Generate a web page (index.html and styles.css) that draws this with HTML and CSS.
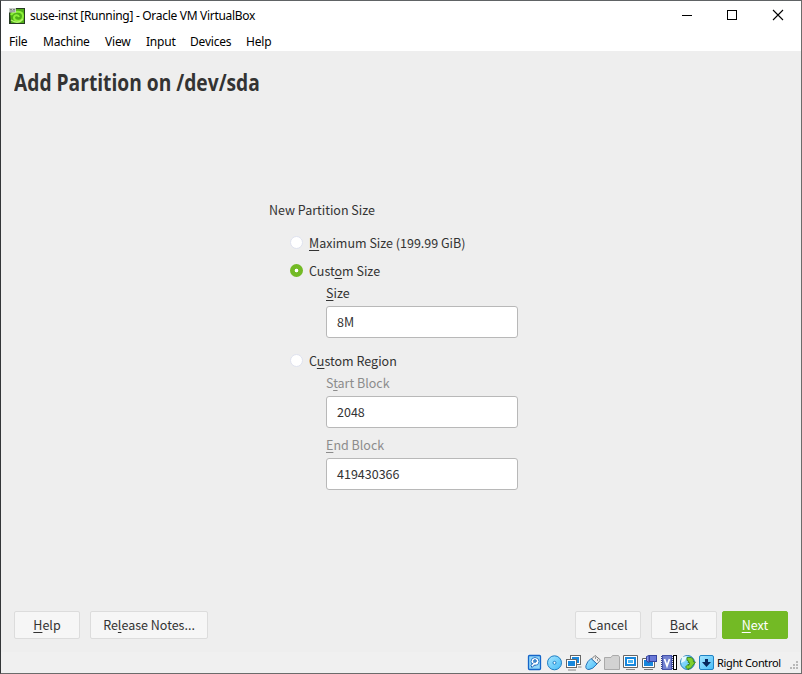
FILE: index.html
```
<!DOCTYPE html>
<html lang="en">
<head>
<meta charset="utf-8">
<title>suse-inst [Running] - Oracle VM VirtualBox</title>
<link rel="stylesheet" href="styles.css">
</head>
<body>
<div class="window">
  <header class="titlebar">
    <svg class="app-icon" width="16" height="16" viewBox="0 0 16 16">
      <rect width="16" height="16" fill="#263a22"/>
      <path d="M1 5L7 1H15V15H2Z" fill="#4fae18"/>
      <path d="M2 7C5 2 14 3 14 8C14 14 6 14 5 10C5 7 9 6 10 9" fill="none" stroke="#8df03a" stroke-width="2"/>
      <path d="M2 12Q9 17 14 11" fill="none" stroke="#b5f56f" stroke-width="1.300"/>
      <rect width="7" height="4.500" fill="#c9cdc8"/>
      <path d="M1 1.500H3M4 1.500H6M1 3H6" stroke="#66706a" stroke-width=".8"/>
    </svg>
    <span class="caption">suse-inst [Running] - Oracle VM VirtualBox</span>
    <div class="controls">
      <svg width="46" height="29" viewBox="0 0 46 29" shape-rendering="crispEdges"><path d="M18 14.500H28" stroke="#000"/></svg>
      <svg width="46" height="29" viewBox="0 0 46 29" shape-rendering="crispEdges"><rect x="17.500" y="9.500" width="9" height="9" fill="none" stroke="#000"/></svg>
      <svg width="46" height="29" viewBox="0 0 46 29"><path d="M17 9L27 19M27 9L17 19" stroke="#000" stroke-width="1.100"/></svg>
    </div>
  </header>
  <nav class="menubar">
    <span class="m-file">File</span><span class="m-machine">Machine</span><span class="m-view">View</span><span class="m-input">Input</span><span class="m-devices">Devices</span><span class="m-help">Help</span>
  </nav>
  <main class="screen">
    <h1>Add Partition on /dev/sda</h1>
    <form class="form">
      <div class="group-title">New Partition Size</div>
      <div class="option first"><i class="radio"></i><span><u>M</u>aximum Size (199.99 GiB)</span></div>
      <div class="option second"><i class="radio on"></i><span>Cust<u>o</u>m Size</span></div>
      <div class="field"><div class="label"><u>S</u>ize</div><div class="input">8M</div></div>
      <div class="option third"><i class="radio"></i><span>C<u>u</u>stom Region</span></div>
      <div class="field off"><div class="label">S<u>t</u>art Block</div><div class="input">2048</div></div>
      <div class="field off last"><div class="label"><u>E</u>nd Block</div><div class="input">419430366</div></div>
    </form>
    <footer class="buttons">
      <div class="btn"><span><u>H</u>elp</span></div>
      <div class="btn wide"><span>Re<u>l</u>ease Notes...</span></div>
      <div class="btn cancel"><span><u>C</u>ancel</span></div>
      <div class="btn back"><span><u>B</u>ack</span></div>
      <div class="btn next"><span><u>N</u>ext</span></div>
    </footer>
  </main>
  <div class="statusbar">
    <svg width="190" height="18" viewBox="526 654 190 18" class="tray">
      <defs>
        <linearGradient id="sky" x1="0" y1="0" x2="1" y2="1"><stop offset="0" stop-color="#a8e6ff"/><stop offset="1" stop-color="#45bcf8"/></linearGradient>
      </defs>
      <g>
        <rect x="528.500" y="655.500" width="12" height="14" rx="1" fill="#8fd6fa" stroke="#1565c8" stroke-width="1.300"/>
        <circle cx="535" cy="661.500" r="4" fill="#fff" stroke="#2c7ccc"/>
        <circle cx="535" cy="661" r="1.300" fill="#5fb9ee" stroke="#1c62b4"/>
        <path d="M533.500 662.500L531 665.500L532 667.500L535 664.500" fill="#fff" stroke="#1c62b4"/>
      </g>
      <g>
        <circle cx="554.500" cy="662.800" r="7" fill="url(#sky)" stroke="#1f7fc4"/>
        <circle cx="554.500" cy="662.800" r="1.500" fill="#fff" stroke="#1f7fc4"/>
      </g>
      <g>
        <path d="M568 670H576M578 667H581.500" stroke="#888"/>
        <rect x="570.500" y="655.500" width="10" height="9" fill="#fff" stroke="#666"/>
        <rect x="572" y="657" width="7" height="6" fill="#1787dc"/>
        <rect x="566.500" y="659.500" width="10" height="8" fill="#fff" stroke="#666"/>
        <rect x="568" y="661" width="7" height="5" fill="#1787dc"/>
      </g>
      <g>
        <path d="M595 655.500L600.500 660L597 664L591.500 659Z" fill="#eee" stroke="#777"/>
        <path d="M591 658.500L597 664Q592.500 669.500 589 669.500Q585 669.500 586 665.500Q587 661.500 591 658.500Z" fill="url(#sky)" stroke="#2872b8"/>
        <path d="M595 658h1M597 660h1" stroke="#444"/>
      </g>
      <path d="M604.500 669.500V657.500H611L612.500 655.500H618.500L619.500 657V669.500Z" fill="#d2d2d2" stroke="#aaa"/>
      <g>
        <path d="M623.500 655.500H637.500V667.500H623.500Z" fill="#fff" stroke="#666"/>
        <rect x="625" y="657" width="11" height="9" fill="#1787dc"/>
        <rect x="627.500" y="659.500" width="6" height="4" fill="#4bb5f3" stroke="#fff"/>
        <path d="M626 669.500H635" stroke="#888"/>
      </g>
      <g>
        <path d="M642.500 658.500H654.500V667.500H642.500Z" fill="#fff" stroke="#666"/>
        <rect x="644" y="660" width="9" height="6" fill="#1787dc"/>
        <path d="M644 669.500H653" stroke="#777"/>
        <path d="M646.500 656.500L649 655.500V662.500L646.500 661Z" fill="#8795ed" stroke="#34449f"/>
        <rect x="649.500" y="655.500" width="7" height="6" fill="#6978d8" stroke="#34449f"/>
      </g>
      <g>
        <rect x="662.500" y="655.500" width="9" height="14" fill="#7180d0" stroke="#4653a8"/>
        <path d="M661.500 656V669M672.500 656V669" stroke="#2d3b91" stroke-dasharray="1 1"/>
        <path d="M664.500 659L667 666L669.500 659" fill="none" stroke="#fff" stroke-width="1.700"/>
        <rect x="673.500" y="655.500" width="3" height="14" fill="#fff" stroke="#000"/>
      </g>
      <g>
        <circle cx="687.500" cy="662.500" r="7" fill="url(#sky)" stroke="#267db5"/>
        <path d="M682 657L687 656L685 661L681 663Z" fill="#e6faff"/>
        <path d="M687 657.500H691Q694 658.500 693.500 662H695.500L692 666.500Q691 669 688.500 668.500V670L685.500 667L688.500 664V665.500Q690 665 689.500 662.500H688Q690 660.500 687 660.500Z" fill="#7fcf2e" stroke="#347c18" stroke-width=".8"/>
      </g>
      <g>
        <rect x="699.500" y="655.500" width="14" height="14" rx="1.500" fill="url(#sky)" stroke="#1f82c4"/>
        <path d="M705 659H708V662H711L706.500 667L702 662H705Z" fill="#08285d"/>
      </g>
    </svg>
    <span class="hostkey">Right Control</span>
    <svg class="grip" width="9" height="9" viewBox="0 0 9 9" fill="#b8b8b8"><path d="M6 0h2v2H6zM3 3h2v2H3zM6 3h2v2H6zM0 6h2v2H0zM3 6h2v2H3zM6 6h2v2H6z"/></svg>
  </div>
</div>
</body>
</html>
```
FILE: styles.css
```
* { box-sizing: border-box; }
body { margin: 0; background: #fff; overflow: hidden; }

.window {
  width: 802px;
  height: 674px;
  display: flex;
  flex-direction: column;
  border: 1px solid #6b6b6b;
  border-top-color: #606365;
  border-left-color: #333638;
  background: #fff;
  font-family: "Noto Sans", "Open Sans", sans-serif;
  font-size: 12px;
  color: #000;
}

.titlebar { height: 29px; display: flex; align-items: center; padding-left: 8px; }
.app-icon { flex: none; }
.caption { margin-left: 5px; white-space: nowrap; letter-spacing: -0.3px; line-height: 29px; }
.controls { margin-left: auto; margin-right: -1px; display: flex; }
.controls svg { display: block; }

.menubar { height: 21px; display: flex; padding-left: 8px; line-height: 24px; letter-spacing: -0.2px; }
.menubar span { white-space: nowrap; }
.m-file { width: 34px; }
.m-machine { width: 62px; }
.m-view { width: 41px; }
.m-input { width: 44px; }
.m-devices { width: 56px; }

.screen {
  height: 601px;
  display: flex;
  flex-direction: column;
  background: #eee;
  color: #333;
  font-family: "Noto Sans CJK SC", sans-serif;
  font-size: 12.5px;
}
h1 {
  width: max-content;
  margin: 13px 0 0 13px;
  font-family: "Open Sans", sans-serif;
  font-size: 24px;
  line-height: 36px;
  font-weight: 700;
  transform: scaleX(.8);
  transform-origin: left;
}
u { text-decoration: underline; text-decoration-thickness: 1px; text-underline-offset: 2px; text-decoration-skip-ink: none; }

.form { margin: 100px 0 0 268px; width: 250px; }
.group-title { height: 20px; line-height: 20px; }
.option { height: 20px; line-height: 20px; display: flex; align-items: center; padding-left: 21px; gap: 6px; white-space: nowrap; }
.first { margin-top: 13px; }
.second { margin-top: 8px; }
.third { margin-top: 13px; }
.radio { width: 13px; height: 13px; border: 1px solid #dfe2ef; border-radius: 50%; background: #fff; position: relative; top: -1px; }
.radio.on { border: 4.5px solid #73ba25; background: radial-gradient(circle, #fff 1.5px, #73ba25 2.2px) border-box; }
.field { margin-left: 57px; padding-top: 2px; }
.field.last { padding-top: 7px; }
.label { height: 20px; line-height: 20px; }
.off .label { color: #8c8c8c; }
.input { width: 192px; height: 32px; margin-top: 3px; border: 1px solid #b8b8b8; border-radius: 3px; background: #fff; padding-left: 10px; line-height: 29px; }

.buttons { margin: auto 13px 13px 13px; display: flex; }
.btn { width: 66px; height: 28px; border: 1px solid #dcdcdc; border-radius: 2px; background: #f6f6f6; text-align: center; line-height: 25px; white-space: nowrap; }
.wide { width: 118px; margin-left: 10px; }
.cancel { margin-left: auto; }
.back { margin-left: 10px; }
.next { margin-left: 5px; background: #73ba25; border-color: #73ba25; color: #fff; }

.statusbar { height: 21px; display: flex; align-items: center; background: #f0f0f0; padding-left: 525px; }
.tray { flex: none; }
.hostkey { margin-left: 1px; white-space: nowrap; font-size: 11px; line-height: 20px; letter-spacing: -0.35px; }
.grip { margin: 6px 2px 0 auto; }
```
